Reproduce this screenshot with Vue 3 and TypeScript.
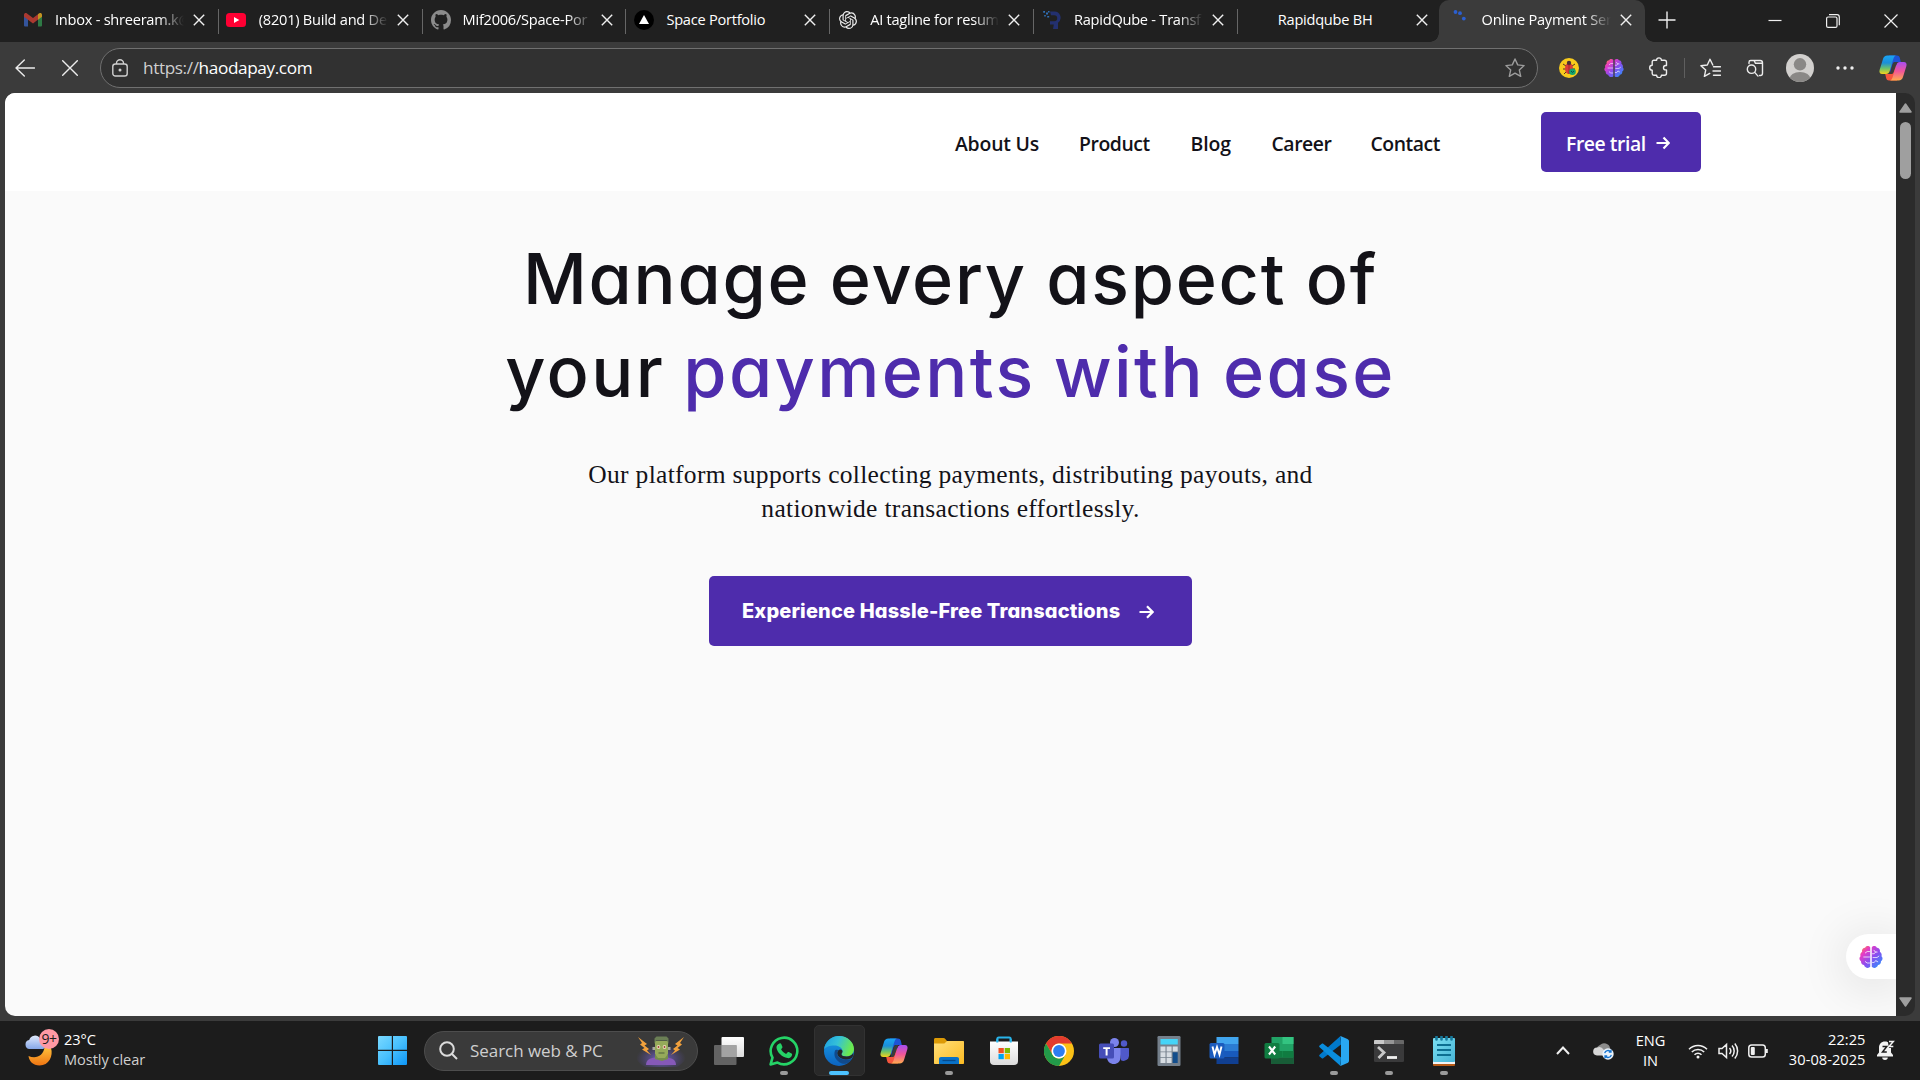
<script setup lang="ts">
interface Tab {
  title: string
  icon: string
  active?: boolean
  fades?: boolean
}

interface TaskItem {
  name: string
  running?: boolean
  active?: boolean
}

const tabs: Tab[] = [
  { title: 'Inbox - shreeram.k@', icon: 'gmail', fades: true },
  { title: '(8201) Build and De', icon: 'youtube', fades: true },
  { title: 'Mif2006/Space-Por', icon: 'github', fades: true },
  { title: 'Space Portfolio', icon: 'vercel' },
  { title: 'AI tagline for resum', icon: 'openai', fades: true },
  { title: 'RapidQube - Transf', icon: 'rapid', fades: true },
  { title: 'Rapidqube BH', icon: '' },
  { title: 'Online Payment Ser', icon: 'loading', active: true, fades: true },
]

const navLinks: string[] = ['About Us', 'Product', 'Blog', 'Career', 'Contact']

const taskItems: TaskItem[] = [
  { name: 'taskview' },
  { name: 'whatsapp', running: true },
  { name: 'edge', active: true },
  { name: 'copilot' },
  { name: 'folder', running: true },
  { name: 'store' },
  { name: 'chrome' },
  { name: 'teams' },
  { name: 'calc' },
  { name: 'word' },
  { name: 'excel' },
  { name: 'vscode', running: true },
  { name: 'terminal', running: true },
  { name: 'notepad', running: true },
]
</script>

<template>
  <div class="screen">
    <svg class="sprite" width="0" height="0" aria-hidden="true">
      <defs>
        <linearGradient id="gBrain" x1="0" y1="0" x2="1" y2="1">
          <stop offset="0" stop-color="#ff9a1f" /><stop offset=".25" stop-color="#e83bc4" />
          <stop offset=".55" stop-color="#8a4df0" /><stop offset="1" stop-color="#1e9bff" />
        </linearGradient>
        <linearGradient id="gCopA" x1="0" y1="0" x2="0" y2="1">
          <stop offset="0" stop-color="#1aa5f5" /><stop offset=".4" stop-color="#1b8fd8" />
          <stop offset=".7" stop-color="#6cc36a" /><stop offset="1" stop-color="#f4d21c" />
        </linearGradient>
        <linearGradient id="gCopB" x1="0" y1="0" x2="0" y2="1">
          <stop offset="0" stop-color="#a64df0" /><stop offset=".5" stop-color="#f0559a" />
          <stop offset="1" stop-color="#ffab4d" />
        </linearGradient>
        <linearGradient id="gEdge" x1="0" y1="0" x2="1" y2=".3">
          <stop offset="0" stop-color="#1b9de2" /><stop offset=".5" stop-color="#35c1d8" />
          <stop offset="1" stop-color="#6bea4e" />
        </linearGradient>
        <linearGradient id="gEdgeB" x1="0" y1="0" x2="0" y2="1">
          <stop offset="0" stop-color="#1a9fe6" /><stop offset="1" stop-color="#0c63c0" />
        </linearGradient>
        <linearGradient id="gWin" x1="0" y1="0" x2="1" y2="1" gradientUnits="objectBoundingBox">
          <stop offset="0" stop-color="#7ad9ff" /><stop offset=".5" stop-color="#48c0fd" /><stop offset="1" stop-color="#0d96f8" />
        </linearGradient>
        <linearGradient id="gFolder" x1="0" y1="0" x2="1" y2="1">
          <stop offset="0" stop-color="#ffdf7a" /><stop offset="1" stop-color="#fcbb22" />
        </linearGradient>
        <linearGradient id="gMoon" x1="0" y1="0" x2="0" y2="1">
          <stop offset="0" stop-color="#ffc23c" /><stop offset="1" stop-color="#ee7412" />
        </linearGradient>
        <linearGradient id="gCloud" x1="0" y1="0" x2="0" y2="1">
          <stop offset="0" stop-color="#dfe9fb" /><stop offset="1" stop-color="#86a7e8" />
        </linearGradient>
        <linearGradient id="gWhite" x1="0" y1="0" x2="0" y2="1">
          <stop offset="0" stop-color="#ffffff" /><stop offset="1" stop-color="#dcdcdc" />
        </linearGradient>
        <linearGradient id="gNote" x1="0" y1="0" x2="1" y2="1">
          <stop offset="0" stop-color="#7be0f2" /><stop offset="1" stop-color="#46b4d6" />
        </linearGradient>
        <radialGradient id="gGlow" cx=".5" cy=".6" r=".5">
          <stop offset="0" stop-color="#7f6ae0" stop-opacity=".9" /><stop offset="1" stop-color="#5b4cae" stop-opacity="0" />
        </radialGradient>
      </defs>

      <symbol id="i-gmail" viewBox="0 0 18 14">
        <path d="M0 2v10.600a1 1 0 0 0 1 1h3V5.500z" fill="#34549b" />
        <path d="M18 2v10.600a1 1 0 0 1-1 1h-3V5.500z" fill="#2e7a45" />
        <path d="M0 1.800C0 .2 1.800-.4 3 .5l6 4.600L15 .5v5.300l-6 4.600L0 3.700z" fill="#ab3930" />
        <path d="M14 1.300l1-.8c1.200-.9 3-.3 3 1.300v1.900l-4 3z" fill="#c39322" />
      </symbol>
      <symbol id="i-youtube" viewBox="0 0 20 14">
        <rect width="20" height="14" rx="3.500" fill="#ff0033" /><path d="M8 4l5.300 3L8 10z" fill="#fff" />
      </symbol>
      <symbol id="i-github" viewBox="0 0 16 16">
        <path fill="#8b8b8b" d="M8 0C3.580 0 0 3.580 0 8c0 3.540 2.290 6.530 5.470 7.590.4.070.55-.17.55-.38 0-.19-.01-.82-.01-1.490-2.010.37-2.530-.49-2.690-.94-.09-.23-.48-.94-.82-1.130-.28-.15-.68-.52-.01-.53.63-.01 1.080.58 1.230.82.72 1.210 1.870.87 2.330.66.070-.52.28-.87.51-1.070-1.780-.2-3.640-.89-3.640-3.950 0-.87.31-1.590.82-2.150-.08-.2-.36-1.020.08-2.120 0 0 .67-.21 2.200.82.64-.18 1.320-.27 2-.27s1.360.09 2 .27c1.530-1.040 2.200-.82 2.200-.82.44 1.100.16 1.920.08 2.120.51.56.82 1.270.82 2.150 0 3.070-1.870 3.750-3.650 3.950.29.25.54.73.54 1.480 0 1.070-.01 1.930-.01 2.200 0 .21.15.46.55.38A8 8 0 0 0 16 8c0-4.420-3.580-8-8-8z" />
      </symbol>
      <symbol id="i-vercel" viewBox="0 0 20 20">
        <circle cx="10" cy="10" r="10" fill="#000" /><path d="M10 5l5 9H5z" fill="#fff" />
      </symbol>
      <symbol id="i-openai" viewBox="0 0 24 24">
        <path fill="#ececec" d="M22.282 9.821a5.985 5.985 0 0 0-.516-4.910 6.046 6.046 0 0 0-6.510-2.900A6.065 6.065 0 0 0 4.981 4.182a5.985 5.985 0 0 0-3.998 2.900 6.046 6.046 0 0 0 .743 7.097 5.980 5.980 0 0 0 .510 4.911 6.051 6.051 0 0 0 6.515 2.900A5.985 5.985 0 0 0 13.260 24a6.056 6.056 0 0 0 5.772-4.206 5.990 5.990 0 0 0 3.998-2.900 6.056 6.056 0 0 0-.748-7.073zM13.260 22.430a4.476 4.476 0 0 1-2.876-1.040l.141-.081 4.779-2.758a.795.795 0 0 0 .392-.681v-6.737l2.020 1.169a.071.071 0 0 1 .038.052v5.583a4.504 4.504 0 0 1-4.494 4.493zM3.600 18.304a4.471 4.471 0 0 1-.535-3.014l.142.085 4.783 2.759a.771.771 0 0 0 .781 0l5.843-3.369v2.332a.080.080 0 0 1-.033.062L9.740 19.950a4.500 4.500 0 0 1-6.140-1.646zM2.341 7.896a4.485 4.485 0 0 1 2.365-1.973V11.600a.766.766 0 0 0 .388.676l5.814 3.355-2.020 1.168a.076.076 0 0 1-.071 0l-4.830-2.786A4.504 4.504 0 0 1 2.341 7.872zm16.597 3.855l-5.833-3.387L15.119 7.200a.076.076 0 0 1 .071 0l4.830 2.791a4.494 4.494 0 0 1-.676 8.105v-5.678a.790.790 0 0 0-.407-.667zm2.010-3.023l-.141-.085-4.774-2.782a.776.776 0 0 0-.785 0L9.409 9.230V6.897a.066.066 0 0 1 .028-.061l4.830-2.787a4.500 4.500 0 0 1 6.680 4.660zM8.307 12.863l-2.020-1.164a.080.080 0 0 1-.038-.057V6.075a4.500 4.500 0 0 1 7.375-3.453l-.142.080L8.704 5.460a.795.795 0 0 0-.393.681zm1.097-2.365l2.602-1.500 2.607 1.500v2.999l-2.597 1.500-2.607-1.500z" />
      </symbol>
      <symbol id="i-rapid" viewBox="0 0 18 18">
        <path d="M7 .500h4a6.200 6.200 0 0 1 4 11.200V18H10l.8-4.500H7v-3.200h4.200a3 3 0 0 0 0-6H8z" fill="#23306f" />
        <path d="M.2 0h1.800v1.800H.2zM3 1.600h2v2H3zM1.200 4h1.600v1.600H1.200zM5 0h1.500v1.500H5zM4.200 4.900h2v1.600h-2z" fill="#2f6fb5" />
      </symbol>
      <symbol id="i-loading" viewBox="0 0 18 18">
        <circle cx="4.500" cy="4" r="1.900" fill="#2b5fd0" /><circle cx="9" cy="5.200" r="1.900" fill="#2b5fd0" /><circle cx="12.800" cy="10.600" r="1.900" fill="#2b5fd0" />
      </symbol>
      <symbol id="i-brain" viewBox="0 0 22 22">
        <path fill="url(#gBrain)" d="M10.300 2.200C9.300.600 6.400.500 5.600 2.500 3.400 2.600 2.300 4.600 2.900 6.300 1.300 7.200.900 9 1.400 10.200-.1 11.500.200 13.900 1.900 14.800c-.3 2 1 3.400 2.700 3.600.5 2.700 4.300 3.400 5.700 1.600zM11.700 2.200c1-1.600 3.900-1.700 4.700.3 2.200.1 3.300 2.100 2.700 3.800 1.600.9 2 2.700 1.500 3.900 1.500 1.300 1.200 3.700-.5 4.600.3 2-1 3.400-2.700 3.600-.5 2.700-4.300 3.400-5.700 1.600z" />
        <path d="M4 11h6M5.500 7.500 7.500 6H10M5.500 15l2 1.500H10M12 8h2l1.500-2M13.500 4.500 15 6.500h2M12 16h2l1.500-2M15.500 14.500l2 1M12.500 11.500h4l2-1.500" fill="none" stroke="#fff" stroke-opacity=".75" stroke-width=".9" />
      </symbol>
      <symbol id="i-copilot" viewBox="0 0 28 26">
        <path d="M10 .500h8c1.500 0 2.300.7 2.800 2.200l1 4.300h-5.300c-1.700 0-2.500.8-3 2.500L11 18.500z" fill="#1d53d6" />
        <path d="M18 25.500h-8c-1.500 0-2.300-.7-2.800-2.200l-1-4.300h5.300c1.700 0 2.500-.8 3-2.500L17 7.500z" fill="#f5553d" />
        <path d="M8.500.500h9c-1.800.2-2.600 1.500-3.200 3.500l-3.600 12c-.6 2-1.700 3-3.700 3H3.200C.8 19 0 17.300.6 15L4 4C4.700 1.700 6 .500 8.500.500z" fill="url(#gCopA)" />
        <path d="M19.500 25.500h-9c1.800-.2 2.600-1.500 3.200-3.500l3.600-12c.6-2 1.700-3 3.700-3h3.800c2.400 0 3.200 1.700 2.600 4L24 22c-.7 2.300-2 3.500-4.500 3.500z" fill="url(#gCopB)" />
        <path d="M13.600 9.500c.5-1.700 1.300-2.500 3-2.500h1.700L14.600 17c-.5 1.400-1.200 2-2.600 2h-1.300z" fill="#3b3b3b" />
      </symbol>

      <symbol id="t-taskview" viewBox="0 0 30 30">
        <rect x="7.500" y="1" width="22.500" height="20" rx="1" fill="url(#gWhite)" />
        <rect x="0" y="9" width="22.500" height="20" rx="1" fill="#6c6c6c" fill-opacity=".9" />
        <rect x="7.500" y="9" width="15" height="12" fill="#a3a3a3" />
      </symbol>
      <symbol id="t-whatsapp" viewBox="0 0 30 30">
        <path d="M1.600 28.400l1.900-6.700A13.300 13.300 0 1 1 8.500 26.600z" fill="none" stroke="#25d366" stroke-width="2.600" stroke-linejoin="round" />
        <path d="M10.500 7.500c.6-.3 1.400-.2 1.700.5l1.200 2.800c.2.500 0 .9-.3 1.300l-1 1.200c1.100 2.200 2.800 3.700 5 4.700l1.400-1.600c.4-.4.800-.5 1.300-.3l2.700 1.300c.6.300.7.7.6 1.300-.4 2.400-2.500 3.700-4.600 3.400-5.400-.9-10.300-5.500-11-10.300-.2-1.800.9-3.500 3-4.300z" fill="#25d366" />
      </symbol>
      <symbol id="t-edge" viewBox="0 0 30 30">
        <circle cx="15" cy="15" r="15" fill="url(#gEdgeB)" />
        <path d="M0 13.500C1 5.500 7.500 0 15 0c8.600 0 15 6.200 15 13 0 5-4 7.500-7.500 7.500-3 0-5-1-5-2.300 0-.9 1-1.300 1-3.200 0-3-3.500-5.500-8-5.500C5.500 9.500 1.500 11 0 13.500z" fill="url(#gEdge)" />
        <path d="M11 14.500c-1.800 5 .5 10.500 7 13 3 .9 6-.1 8.500-2.500l1.500-2.300c-2.500 1.300-9.500 1.900-13-1.500-2.500-2.400-2.600-5-.8-7-1.400-.6-2.600-.5-3.200.3z" fill="#114a8b" />
        <path d="M17.500 18.200c0 1.300 2 2.300 5 2.300 3 0 5.500-1.500 6.700-3.500.5 2.500-.5 4.500-2.200 5.600-4 1.500-9 1.400-11.800-1.500-2.300-2.300-2.500-5-1-6.700 1.500-1.600 4-.9 4.300.6 0 1.900-1 2.300-1 3.200z" fill="#252628" />
      </symbol>
      <symbol id="t-copilot" viewBox="-1 -2 30 30"><use href="#i-copilot" x="0" y="0" width="28" height="26" /></symbol>
      <symbol id="t-folder" viewBox="0 0 30 30">
        <path d="M0 3.500C0 2.500.7 2 1.500 2h8c.8 0 1.300.3 1.800.9L13 5v5H0z" fill="#dc9a06" />
        <path d="M0 7.500h9.500c1 0 1.500-.4 2.200-1.200L13 5h16c.7 0 1 .4 1 1v21c0 .7-.4 1-1 1H1c-.6 0-1-.3-1-1z" fill="url(#gFolder)" />
        <path d="M5 28v-5c0-1.200.8-2 2-2h16c1.200 0 2 .8 2 2v5z" fill="#0a72c8" /><path d="M8.500 24.500h13" stroke="#064a8c" stroke-width="1.300" />
      </symbol>
      <symbol id="t-store" viewBox="0 0 30 30">
        <path d="M8.300 8V3c0-1 .5-1.500 1.500-1.500h10.400c1 0 1.500.5 1.500 1.500v5" fill="none" stroke="#28b4ea" stroke-width="2" />
        <path d="M1 5.500h28V25c0 2.500-1.500 4-4 4H5c-2.500 0-4-1.500-4-4z" fill="url(#gWhite)" />
        <path d="M8.300 6.500V3M21.700 6.500V3" stroke="#28b4ea" stroke-width="2" />
        <rect x="9.500" y="12" width="5.300" height="5.200" fill="#f25022" /><rect x="15.700" y="12" width="5.300" height="5.200" fill="#7fba00" />
        <rect x="9.500" y="18" width="5.300" height="5.200" fill="#00a4ef" /><rect x="15.700" y="18" width="5.300" height="5.200" fill="#ffb900" />
      </symbol>
      <symbol id="t-chrome" viewBox="0 0 30 30">
        <circle cx="15" cy="15" r="15" fill="#fbc116" />
        <path d="M2 7.500A15 15 0 0 1 28 7.500H15a7.500 7.500 0 0 0-6.500 11.200z" fill="#e33b2e" />
        <path d="M2 7.500A15 15 0 0 0 15 30l6.500-11.300a7.500 7.500 0 0 1-13 0z" fill="#229a49" />
        <circle cx="15" cy="15" r="7.500" fill="#fff" /><circle cx="15" cy="15" r="5.900" fill="#2d7df0" />
      </symbol>
      <symbol id="t-teams" viewBox="0 0 30 30">
        <circle cx="25" cy="7.500" r="3.200" fill="#5059c9" /><circle cx="15.500" cy="6.500" r="4.500" fill="#7b83eb" />
        <path d="M20 12h9c.6 0 1 .4 1 1v6.500a5.500 5.500 0 0 1-8 4.800z" fill="#5059c9" />
        <path d="M8 12h13.500v9.500c0 3.800-3 6.500-6.700 6.500S8 25.300 8 21.500z" fill="#7b83eb" />
        <rect x="0" y="7.500" width="15" height="15" rx="1.500" fill="#464eb8" />
        <path d="M4.200 11.200h6.800v1.800H8.600v6.500H6.600V13H4.200z" fill="#fff" />
      </symbol>
      <symbol id="t-calc" viewBox="0 0 30 30">
        <rect x="3.500" y="0" width="23" height="30" rx="1.200" fill="#75808c" /><rect x="6.500" y="3" width="17.300" height="5.500" fill="#45d4f7" />
        <path d="M6.500 10.500h5v5h-5zM12.600 10.500h5v5h-5zM18.700 10.500h5v5h-5zM6.500 16.300h5v5h-5zM12.600 16.300h5v5h-5zM6.500 22h5v5h-5zM12.600 22h5v5h-5z" fill="#d7dde3" />
        <rect x="18.700" y="16.300" width="5" height="10.700" fill="#134e8c" />
      </symbol>
      <symbol id="t-word" viewBox="0 0 30 30">
        <path d="M7.500 1h22v7h-22z" fill="#41a5ee" /><path d="M7.500 8h22v7h-22z" fill="#2b7cd3" />
        <path d="M7.500 15h22v6.500h-22z" fill="#185abd" /><path d="M7.500 21.500h22V28h-22z" fill="#103f91" />
        <rect x=".5" y="7" width="15" height="15.500" rx="1.500" fill="#1b5cbe" />
        <path d="M3.500 10.500l2 8L8 11l2.500 7.500 2-8" fill="none" stroke="#fff" stroke-width="1.900" />
      </symbol>
      <symbol id="t-excel" viewBox="0 0 30 30">
        <path d="M7.500 1h22v27h-22z" fill="#21a366" /><path d="M18.500 1h11v7h-11z" fill="#33c481" />
        <path d="M7.500 15h11v6.500h-11z" fill="#107c41" /><path d="M18.500 15h11v6.500h-11z" fill="#107c41" /><path d="M7.500 21.500h22V28h-22z" fill="#185c37" />
        <rect x=".5" y="7" width="15" height="15.500" rx="1.500" fill="#107c41" />
        <path d="M5 10.500l6.200 8M11.200 10.500l-6.200 8" fill="none" stroke="#fff" stroke-width="2.100" />
      </symbol>
      <symbol id="t-vscode" viewBox="0 0 30 30">
        <path d="M22 8.500 4.200 22.200c-.5.400-1 .4-1.400 0L.6 20.400c-.6-.5-.6-1.200 0-1.700L21.500 0z" fill="#0179cb" />
        <path d="M22 21.500 4.200 7.800c-.5-.4-1-.4-1.400 0L.6 9.600c-.6.500-.6 1.200 0 1.700L21.500 30z" fill="#0a8ddd" />
        <path d="M21.500 0l6.900 3c1 .5 1.600 1.200 1.600 2.300v19.400c0 1.100-.6 1.800-1.600 2.300l-6.900 3c-.3-.4.500-1.500.5-3V3c0-1.500-.8-2.600-.5-3z" fill="#29a7f2" />
      </symbol>
      <symbol id="t-terminal" viewBox="0 0 30 30">
        <rect x="0" y="4" width="30" height="22" rx="1.300" fill="#3a3a3b" />
        <path d="M0 8V5.300C0 4.500.5 4 1.300 4H10v4z" fill="#c9c9c9" /><path d="M10 4h10v4H10z" fill="#969696" /><path d="M20 4h8.700c.8 0 1.300.5 1.300 1.300V8H20z" fill="#686868" />
        <path d="M4 11l6 5.500L4.500 22" fill="none" stroke="#c8c8c8" stroke-width="2.800" /><path d="M13 21.500h10" stroke="#f0f0f0" stroke-width="2.800" />
      </symbol>
      <symbol id="t-notepad" viewBox="0 0 30 30">
        <rect x="4" y="25.500" width="22" height="4.500" rx="1" fill="#b85a16" /><rect x="4" y="24" width="22" height="4" fill="#f3f3f3" />
        <rect x="4" y="2" width="22" height="24" rx="1" fill="url(#gNote)" />
        <path d="M8 9h14M8 14h14M8 19h14" stroke="#0c6f92" stroke-width="1.900" />
        <path d="M7.500.500v3M12.500.500v3M17.500.500v3M22.500.500v3" stroke="#16799c" stroke-width="2.600" stroke-linecap="round" />
      </symbol>
    </svg>

    <header class="tabstrip">
      <div v-for="(tab, i) in tabs" :key="tab.title" class="tab" :class="{ active: tab.active, divided: i < 6 }">
        <svg class="fav" :class="'fav-' + tab.icon"><use v-if="tab.icon" :href="'#i-' + tab.icon" /></svg>
        <span class="tab-title" :class="{ fades: tab.fades }">{{ tab.title }}</span>
        <svg class="tab-close" viewBox="0 0 12 12"><path d="M.8.800l10.400 10.400M11.200.800.8 11.200" /></svg>
      </div>
      <svg class="plus" viewBox="0 0 18 18"><path d="M9 .500v17M.500 9h17" /></svg>
      <div class="win-controls">
        <svg viewBox="0 0 14 14"><path d="M.5 6.500h13" /></svg>
        <svg viewBox="0 0 14 14"><rect x=".6" y="3" width="10.400" height="10.400" rx="1.500" /><path d="M3 .700h8a2.300 2.300 0 0 1 2.300 2.300v8.300" /></svg>
        <svg viewBox="0 0 14 14"><path d="M.5.500l13 13M13.500.500l-13 13" /></svg>
      </div>
    </header>

    <div class="toolbar">
      <svg class="back" viewBox="0 0 20 18"><path d="M19.500 9H1M9.300 1 1 9l8.300 8" /></svg>
      <svg class="stop" viewBox="0 0 16 16"><path d="M.7.700l14.600 14.600M15.300.700.7 15.300" /></svg>
      <div class="address">
        <svg class="lock" viewBox="0 0 16 18"><rect x=".8" y="5" width="14.400" height="12" rx="2.600" /><path d="M4.500 5V4a3.500 3.300 0 0 1 7 0v1" /><circle cx="8" cy="11" r=".8" /></svg>
        <span class="url"><span class="scheme">https://</span>haodapay.com</span>
        <svg class="star" viewBox="0 0 20 20"><path d="M10 1l2.700 5.900 6.400.7-4.800 4.300 1.400 6.400L10 15.100l-5.700 3.200 1.400-6.400L.9 7.600l6.400-.7z" /></svg>
      </div>
      <div class="cell">
        <svg width="20" height="20" viewBox="0 0 20 20">
          <circle cx="10" cy="10" r="10" fill="#f8cb1c" />
          <path d="M4 6l3 2M4 11h3M5 16l2.500-2.500M16 6l-3 2M16 11h-3" stroke="#5a3220" />
          <ellipse cx="10" cy="10.500" rx="4" ry="5.500" fill="#d9403a" /><circle cx="10" cy="5" r="2.200" fill="#4a2f38" /><path d="M10 6v10" stroke="#9b2526" stroke-width=".8" />
          <circle cx="13.500" cy="13.800" r="3.300" fill="#12a36b" /><path d="M12 13l1.500 1.500L15 13" stroke="#0a4e4a" fill="none" />
        </svg>
      </div>
      <div class="cell"><svg width="20" height="20"><use href="#i-brain" /></svg></div>
      <div class="cell">
        <svg class="line" width="20" height="21" viewBox="0 0 20 21"><path d="M4.800 3.300h2.800a2.400 2.400 0 0 1 4.800 0h3.100a2 2 0 0 1 2 2v3.200h-.8a2.200 2.200 0 0 0 0 4.400h.8v3.300a2 2 0 0 1-2 2h-3.100a2.400 2.400 0 0 1-4.800 0H4.800a1.600 1.600 0 0 1-1.600-1.600v-3.300a2.500 2.500 0 0 1 0-5V4.900a1.600 1.600 0 0 1 1.600-1.600z" /></svg>
      </div>
      <i class="sep" />
      <div class="cell">
        <svg class="line" width="21" height="20" viewBox="0 0 21 20"><path d="M12.800 7 10 1.200 7.300 7 .9 7.700l4.800 4.400-1.300 6.300 5.300-3M13.500 8.700h7M13 13h7.500M13.500 17.200h7" /></svg>
      </div>
      <div class="cell">
        <svg class="line" width="20" height="20" viewBox="0 0 20 20"><path d="M4 5.500V4.200A1.700 1.700 0 0 1 5.700 2.500h9.600a2.200 2.200 0 0 1 2.200 2.200v10.600a2.200 2.200 0 0 1-2.200 2.200h-.8M9 2.500l1.500 2.800h7" /><circle cx="6.500" cy="11.200" r="4.200" /><path d="M9.700 14.400l3.300 3.700" /></svg>
      </div>
      <div class="cell">
        <svg width="28" height="28" viewBox="0 0 28 28">
          <clipPath id="av"><circle cx="14" cy="14" r="14" /></clipPath>
          <g clip-path="url(#av)"><rect width="28" height="28" fill="#d2d0ce" /><circle cx="14" cy="10.300" r="6.200" fill="#8a8886" /><ellipse cx="14" cy="25" rx="10.500" ry="7" fill="#8a8886" /></g>
        </svg>
      </div>
      <div class="cell"><svg width="18" height="4" viewBox="0 0 18 4" fill="#efefef"><circle cx="2" cy="2" r="1.700" /><circle cx="9" cy="2" r="1.700" /><circle cx="16" cy="2" r="1.700" /></svg></div>
      <div class="cell wide"><svg width="28" height="26"><use href="#i-copilot" /></svg></div>
    </div>

    <div class="viewport">
      <main class="page">
        <nav class="site-nav">
          <a v-for="link in navLinks" :key="link" class="nav-link" :class="'nav-' + link.slice(0, 2).toLowerCase()">{{ link }}</a>
          <a class="trial"><span>Free trial</span><svg width="14" height="14" viewBox="0 0 14 14"><path d="M.500 7h12M7.500 1.500 12.800 7l-5.300 5.500" /></svg></a>
        </nav>
        <section class="hero">
          <h1>
            <span class="l1">Manage every aspect of</span>
            <span class="l2">your <em>payments with ease</em></span>
          </h1>
          <p><span>Our platform supports collecting payments, distributing payouts, and</span><span>nationwide transactions effortlessly.</span></p>
          <a class="cta"><span>Experience Hassle-Free Transactions</span><svg width="15" height="14" viewBox="0 0 15 14"><path d="M.500 7h13M8 1.200 13.600 7 8 12.800" /></svg></a>
        </section>
        <div class="assistant"><svg width="24" height="24"><use href="#i-brain" /></svg></div>
      </main>
      <div class="scrollbar">
        <svg width="13" height="10" viewBox="0 0 13 10"><path d="M6.500 1 12 9H1z" /></svg>
        <i class="thumb" />
        <svg class="down" width="13" height="10" viewBox="0 0 13 10"><path d="M6.500 9 1 1h11z" /></svg>
      </div>
    </div>

    <footer class="taskbar">
      <div class="weather">
        <svg width="36" height="38" viewBox="0 0 36 38">
          <path d="M26 18c2.500 8-2 17.500-11.500 17.500C8 35.500 4 31 3.500 26c7 3 15 .5 16-9z" fill="url(#gMoon)" />
          <path d="M4.500 19a4.500 4.500 0 0 1-.3-8.900A5.800 5.800 0 0 1 15 8.700 5 5 0 0 1 18 19z" fill="url(#gCloud)" />
        </svg>
        <span class="count">9+</span>
        <div class="weather-text"><span>23°C</span><span class="dim">Mostly clear</span></div>
      </div>
      <svg class="start" viewBox="0 0 29 29"><path fill="url(#gWin)" d="M1 0h12.800v13.800H0V1a1 1 0 0 1 1-1zM15 0h13a1 1 0 0 1 1 1v12.800H15zM0 15h13.800v14H1a1 1 0 0 1-1-1zM15 15h14v13a1 1 0 0 1-1 1H15z" /></svg>
      <div class="search">
        <svg width="19" height="19" viewBox="0 0 19 19"><circle cx="8" cy="8" r="6.800" /><path d="M13 13l5 5" /></svg>
        <span>Search web &amp; PC</span>
        <svg class="monster" width="50" height="32" viewBox="0 0 50 32">
          <ellipse cx="25" cy="21" rx="25" ry="14" fill="url(#gGlow)" />
          <path d="M10 30c0-5 4-7 9-7.500h12c5 .5 9 2.500 9 7.500z" fill="#8659b8" />
          <path d="M19 20h13v4l-6 2-7-2z" fill="#768d4d" /><path d="M19 6h13v13l-3 4h-7l-3-4z" fill="#96aa5a" />
          <path d="M18.500 9V3.500l2-2h10l2 2V9L31 5.500H20z" fill="#6b7f55" />
          <path d="M16.500 12H19v3h-2.500zM32 12h2.500v3H32z" fill="#aaa9a0" />
          <circle cx="22.500" cy="12" r="1.900" fill="#e5dfb6" /><circle cx="28.500" cy="12" r="1.900" fill="#e5dfb6" /><circle cx="22.500" cy="12" r=".9" fill="#a03b3b" /><circle cx="28.500" cy="12" r=".9" fill="#a03b3b" />
          <path d="M22.500 18h6" stroke="#4d5f3c" />
          <path d="M2 2l9 7-2.500 1.500L13 14l-2 1.500 4 4.500-9-5.500 2.500-1.500L4 9.500 6 8zM48 2l-9 7 2.500 1.500L37 14l2 1.500L35 20l9-5.500-2.500-1.500L46 9.500 44 8z" fill="#f2a13c" />
        </svg>
      </div>
      <div class="apps">
        <div v-for="item in taskItems" :key="item.name" class="app" :class="{ running: item.running, current: item.active }">
          <svg width="30" height="30"><use :href="'#t-' + item.name" /></svg>
        </div>
      </div>
      <div class="tray">
        <svg class="chev" width="14" height="9" viewBox="0 0 14 9"><path d="M1 8l6-6.500L13 8" /></svg>
        <svg class="onedrive" width="21" height="18" viewBox="0 0 21 18">
          <path d="M5 12a5.500 5.500 0 0 1 2-9A6 6 0 0 1 17 6l2 5z" fill="#8c8c8c" /><path d="M4 13.500a4 4 0 0 1 .3-8 5 5 0 0 1 6.200 2L15 13.500z" fill="#d6d6d6" />
          <circle cx="15" cy="12" r="5.700" fill="#e9f2fb" /><path d="M11.700 11.200a3.400 3.400 0 0 1 6-1.400M18.300 12.800a3.400 3.400 0 0 1-6 1.400M18 7.800v2.300h-2.200M12 16.200v-2.300h2.200" fill="none" stroke="#1473cf" stroke-width="1.300" />
        </svg>
        <div class="lang"><span>ENG</span><span>IN</span></div>
        <svg class="wifi" width="20" height="16" viewBox="0 0 20 16"><path d="M1 6.200a12.700 12.700 0 0 1 18 0M3.800 9a8.700 8.700 0 0 1 12.400 0M6.500 11.800a5 5 0 0 1 7 0" /><circle cx="10" cy="14" r="1.500" /></svg>
        <svg class="vol" width="21" height="18" viewBox="0 0 21 18"><path d="M1 6.500h3l4.500-4v13l-4.500-4H1zM11.500 6a4.500 4.500 0 0 1 0 6M14 3.500a8 8 0 0 1 0 11M16.800 1.500a11.500 11.500 0 0 1 0 15" /></svg>
        <svg class="bat" width="21" height="14" viewBox="0 0 21 14"><rect x=".8" y="1" width="16.500" height="12" rx="2.800" /><path d="M18.600 5v4" stroke-width="2.400" /><rect class="fill" x="2.800" y="3" width="4" height="8" rx="1" /></svg>
        <div class="clock"><span>22:25</span><span>30-08-2025</span></div>
        <svg class="bell" width="18" height="20" viewBox="0 0 18 20">
          <path d="M8 1.500c-3.800 0-6 2.700-6 6v5L0 15v1.500h16V15l-2-2.500v-5c0-3.300-2.200-6-6-6zM5.200 17.500a2.800 2.500 0 0 0 5.600 0z" fill="#f2f2f2" />
          <path d="M5.500 6.500h4.300l-4.300 5.500h4.300" fill="none" stroke="#1c1c1c" stroke-width="1.500" /><path d="M10.500 0H18v8h-6z" fill="#1c1c1c" /><path d="M12 1.500h4.300L12 6.500h4.300" fill="none" stroke="#f2f2f2" stroke-width="1.500" />
        </svg>
      </div>
    </footer>
  </div>
</template>

<style>
html,
body {
  margin: 0;
  background: #1c1c1c;
  overflow: hidden;
}
</style>

<style scoped>
.screen {
  width: 1920px;
  height: 1080px;
  display: flex;
  flex-direction: column;
  background: #3b3b3b;
  font-family: 'Open Sans', 'Noto Sans', sans-serif;
  color: #fff;
  overflow: hidden;
}
.sprite {
  position: absolute;
}
svg {
  display: block;
  flex: none;
}

/* Tab strip */
.tabstrip {
  height: 42px;
  flex: none;
  display: flex;
  align-items: center;
  padding-left: 14px;
  background: #202020;
}
.tab {
  box-sizing: border-box;
  width: 203.8px;
  height: 42px;
  flex: none;
  display: flex;
  align-items: center;
  padding: 0 0 2px 9px;
  position: relative;
}
.tab.divided::after {
  content: '';
  position: absolute;
  right: -1px;
  top: 9px;
  width: 1px;
  height: 25px;
  background: #666;
}
.tab.active {
  width: 206px;
  margin-left: -1.5px;
  padding-left: 10.5px;
  background: #3b3b3b;
  border-radius: 10px 10px 0 0;
}
.tab.active::before,
.tab.active::after {
  content: '';
  position: absolute;
  bottom: 0;
  width: 9px;
  height: 9px;
}
.tab.active::before {
  left: -9px;
  background: radial-gradient(circle at 0 0, #202020 8.5px, #3b3b3b 9px);
}
.tab.active::after {
  right: -9px;
  background: radial-gradient(circle at 100% 0, #202020 8.5px, #3b3b3b 9px);
}
.fav {
  width: 20px;
  height: 20px;
  margin-right: 12px;
}
.fav-gmail {
  width: 18px;
  height: 14px;
  margin: 0 13px 0 1px;
}
.fav-youtube {
  height: 14px;
  margin-left: -1px;
  margin-right: 13px;
}
.fav-openai,
.fav-rapid,
.fav-loading {
  width: 18px;
  height: 18px;
  margin: 0 13px 0 1px;
}
.fav-loading {
  margin-top: -6px;
}
.tab-title {
  width: 130px;
  margin-top: -2px;
  white-space: nowrap;
  font-size: 14.6px;
  line-height: 20px;
  letter-spacing: -0.25px;
}
.tab-title.fades {
  -webkit-mask-image: linear-gradient(90deg, #000 104px, transparent 129px);
  mask-image: linear-gradient(90deg, #000 104px, transparent 129px);
}
.tab-close {
  width: 12px;
  height: 12px;
  margin-left: 8px;
}
.tab-close path,
.plus path,
.win-controls svg {
  fill: none;
  stroke: #f0f0f0;
  stroke-width: 1.4;
}
.plus {
  width: 18px;
  height: 18px;
  margin: -3px 0 0 13px;
}
.win-controls {
  display: flex;
  margin: 0 22px 0 auto;
  gap: 44px;
}
.win-controls svg {
  width: 14px;
  height: 14px;
  stroke-width: 1.2;
}

/* Toolbar */
.toolbar {
  height: 51px;
  flex: none;
  display: flex;
  align-items: center;
}
.back {
  width: 20px;
  height: 18px;
  margin-left: 15px;
}
.stop {
  width: 16px;
  height: 16px;
  margin-left: 27px;
}
.back,
.stop,
.line {
  fill: none;
  stroke: #ececec;
  stroke-width: 1.4;
  stroke-linecap: round;
  stroke-linejoin: round;
}
.address {
  box-sizing: border-box;
  width: 1438px;
  height: 40px;
  margin-left: 22px;
  padding: 0 12px 0 11px;
  display: flex;
  align-items: center;
  border: 1px solid #707070;
  border-radius: 20px;
  background: #313131;
}
.lock,
.star {
  fill: none;
  stroke: #d0d0d0;
  stroke-width: 1.4;
  stroke-linejoin: round;
}
.lock {
  width: 16px;
  height: 18px;
}
.star {
  width: 20px;
  height: 20px;
  margin-left: auto;
  stroke: #9c9c9c;
}
.url {
  margin-left: 15px;
  font-size: 17.2px;
  letter-spacing: -0.38px;
}
.scheme {
  color: #cfcfcf;
}
.cell {
  width: 45px;
  display: flex;
  justify-content: center;
}
.address + .cell {
  margin-left: 8.5px;
}
.cell.wide {
  width: 51px;
}
.sep {
  width: 1px;
  height: 20px;
  margin: 0 2.5px;
  background: #5f5f5f;
}

/* Browser content */
.viewport {
  height: 923px;
  flex: none;
  display: flex;
  padding-left: 5px;
}
.page {
  width: 1891px;
  position: relative;
  display: flex;
  flex-direction: column;
  overflow: hidden;
  background: #fafafa;
  border-radius: 10px 0 0 10px;
  color: #131218;
}
.site-nav {
  height: 98px;
  flex: none;
  display: flex;
  align-items: center;
  background: #fff;
  font-size: 19.4px;
  font-weight: 600;
  white-space: nowrap;
}
.site-nav a {
  letter-spacing: -0.45px;
}
.nav-link {
  padding-top: 2px;
}
.site-nav .nav-ab {
  width: 124px;
  margin-left: 950px;
  letter-spacing: -0.2px;
}
.nav-pr {
  width: 111.5px;
}
.site-nav .nav-bl {
  width: 81px;
  letter-spacing: -0.1px;
}
.nav-ca {
  width: 99px;
}
.nav-co {
  width: 170.5px;
}
.trial {
  box-sizing: border-box;
  width: 160px;
  height: 60px;
  padding-left: 25px;
  display: flex;
  align-items: center;
  border-radius: 5px;
  background: #4e2cac;
  color: #fff;
}
.trial span {
  width: 90px;
  padding-top: 2px;
}
.trial svg,
.cta svg {
  margin-top: 2px;
  fill: none;
  stroke: #fff;
  stroke-width: 2.2;
}
.hero {
  display: flex;
  flex-direction: column;
  align-items: center;
  text-align: center;
}
h1 {
  margin: 41px 0 0;
  display: flex;
  flex-direction: column;
  align-items: center;
  font-family: Inter, 'Open Sans', sans-serif;
  font-size: 70px;
  line-height: 93px;
  font-weight: 500;
  font-feature-settings: 'cv11';
  white-space: nowrap;
}
.l1 {
  letter-spacing: 1.75px;
  word-spacing: -1px;
}
.l2 {
  letter-spacing: 2.4px;
  word-spacing: -3px;
}
em {
  font-style: normal;
  color: #4e2cac;
}
p {
  margin: 40px 0 0;
  display: flex;
  flex-direction: column;
  align-items: center;
  font-family: 'Liberation Serif', serif;
  font-size: 25.5px;
  line-height: 34px;
  letter-spacing: 0.31px;
  white-space: nowrap;
}
.cta {
  box-sizing: border-box;
  width: 483px;
  height: 70px;
  margin-top: 50px;
  padding-left: 33px;
  display: flex;
  align-items: center;
  border-radius: 5px;
  background: #4e2cac;
  color: #fff;
  font-family: Inter, 'Open Sans', sans-serif;
  font-feature-settings: 'cv11';
  font-weight: 800;
  font-size: 20px;
  letter-spacing: 0.15px;
  white-space: nowrap;
}
.cta span {
  width: 397px;
  text-align: left;
}
.assistant {
  position: absolute;
  right: 0;
  top: 841px;
  box-sizing: border-box;
  width: 50px;
  height: 45px;
  padding-left: 13px;
  display: flex;
  align-items: center;
  border-radius: 23px 0 0 23px;
  background: #fff;
  box-shadow: 0 5px 50px rgba(0, 0, 0, 0.14);
}
.scrollbar {
  width: 19px;
  display: flex;
  flex-direction: column;
  align-items: center;
  background: #2b2b2b;
  border-radius: 0 10px 10px 0;
}
.scrollbar svg {
  margin-top: 10px;
  fill: #9f9f9f;
  stroke: #9f9f9f;
  stroke-width: 1.5;
  stroke-linejoin: round;
}
.thumb {
  width: 11px;
  height: 57px;
  margin-top: 9px;
  border-radius: 6px;
  background: #9f9f9f;
}
.scrollbar .down {
  margin: auto 0 9px;
}

/* Taskbar */
.taskbar {
  height: 59px;
  margin-top: 5px;
  flex: none;
  display: flex;
  align-items: center;
  background: #1c1c1c;
  font-size: 14.6px;
  line-height: 20px;
}
.weather {
  width: 353px;
  padding-left: 25px;
  display: flex;
  align-items: center;
  position: relative;
}
.weather svg {
  margin-top: -4px;
}
.count {
  position: absolute;
  left: 39px;
  top: -4px;
  width: 20px;
  height: 20px;
  border-radius: 50%;
  background: #ff99a4;
  color: #1c1c1c;
  font-size: 14px;
  line-height: 20px;
  text-align: center;
  letter-spacing: -0.5px;
}
.weather-text {
  display: flex;
  flex-direction: column;
  margin: -4px 0 0 3px;
  white-space: nowrap;
  letter-spacing: -0.05px;
}
.dim {
  color: #cfcfcf;
}
.start {
  width: 29px;
  height: 29px;
}
.search {
  box-sizing: border-box;
  width: 274px;
  height: 40px;
  margin-left: 17px;
  padding: 0 11px 0 14px;
  display: flex;
  align-items: center;
  border: 1px solid #4d4d4d;
  border-radius: 20px;
  background: #3a3a3a;
  color: #cfcfcf;
  font-size: 17px;
}
.search svg:first-child {
  fill: none;
  stroke: #dcdcdc;
  stroke-width: 2;
}
.search span {
  margin-left: 12px;
  letter-spacing: -0.05px;
}
.search .monster {
  margin-left: auto;
}
.apps {
  display: flex;
  margin-left: 3.5px;
}
.app {
  width: 55px;
  height: 51px;
  display: flex;
  align-items: center;
  justify-content: center;
  position: relative;
}
.app::after {
  content: '';
  position: absolute;
  bottom: 1px;
  height: 4px;
  border-radius: 2px;
}
.running::after {
  width: 8px;
  background: #9a9a9a;
}
.current::before {
  content: '';
  position: absolute;
  inset: 0 2px;
  border: 1px solid #323232;
  border-radius: 5px;
  background: #292929;
}
.current svg {
  position: relative;
}
.current::after {
  width: 20px;
  background: #4cc2ff;
}
.tray {
  display: flex;
  align-items: center;
  margin-left: 84px;
}
.tray svg {
  fill: none;
  stroke: #f0f0f0;
  stroke-width: 1.5;
}
.tray .chev {
  stroke-width: 2;
}
.tray .onedrive,
.tray .bell {
  stroke: none;
}
.onedrive {
  margin-left: 23px;
}
.lang {
  width: 40px;
  margin: -2px 0 0 17px;
  display: flex;
  flex-direction: column;
  text-align: center;
}
.wifi {
  margin-left: 17px;
}
.tray .wifi circle,
.tray .bat .fill {
  fill: #f0f0f0;
  stroke: none;
}
.vol {
  margin-left: 10px;
}
.bat {
  margin-left: 9px;
}
.clock {
  width: 97px;
  margin-top: -4px;
  display: flex;
  flex-direction: column;
  text-align: right;
  letter-spacing: 0.05px;
}
.bell {
  margin: -2px 0 0 11px;
}
</style>
